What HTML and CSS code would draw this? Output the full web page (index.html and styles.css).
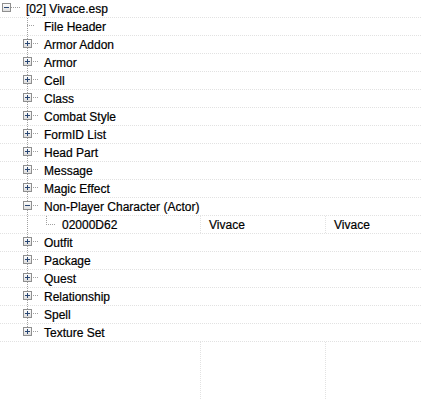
FILE: index.html
```html
<!DOCTYPE html>
<html>
<head>
<meta charset="utf-8">
<link rel="stylesheet" href="styles.css">
</head>
<body>
<svg class="defs" width="0" height="0" aria-hidden="true">
  <defs>
    <linearGradient id="boxfill" x1="0" y1="0" x2="0" y2="1">
      <stop offset="0" stop-color="#ffffff"/>
      <stop offset="1" stop-color="#dcdcdc"/>
    </linearGradient>
  </defs>
</svg>
<div class="tree">
  <div class="row">
    <span class="ind root"><svg class="box" width="9" height="9"><rect x="0.5" y="0.5" width="8" height="8" fill="url(#boxfill)" stroke="#8f8f8f"/><path d="M2 4.5h5" stroke="#2a4773"/></svg></span>
    <span class="label">[02] Vivace.esp</span>
  </div>
  <div class="row">
    <span class="ind l1 leaf"></span>
    <span class="label">File Header</span>
  </div>
  <div class="row">
    <span class="ind l1"><svg class="box" width="9" height="9"><rect x="0.5" y="0.5" width="8" height="8" fill="url(#boxfill)" stroke="#8f8f8f"/><path d="M2 4.5h5M4.5 2v5" stroke="#2a4773"/></svg></span>
    <span class="label">Armor Addon</span>
  </div>
  <div class="row">
    <span class="ind l1"><svg class="box" width="9" height="9"><rect x="0.5" y="0.5" width="8" height="8" fill="url(#boxfill)" stroke="#8f8f8f"/><path d="M2 4.5h5M4.5 2v5" stroke="#2a4773"/></svg></span>
    <span class="label">Armor</span>
  </div>
  <div class="row">
    <span class="ind l1"><svg class="box" width="9" height="9"><rect x="0.5" y="0.5" width="8" height="8" fill="url(#boxfill)" stroke="#8f8f8f"/><path d="M2 4.5h5M4.5 2v5" stroke="#2a4773"/></svg></span>
    <span class="label">Cell</span>
  </div>
  <div class="row">
    <span class="ind l1"><svg class="box" width="9" height="9"><rect x="0.5" y="0.5" width="8" height="8" fill="url(#boxfill)" stroke="#8f8f8f"/><path d="M2 4.5h5M4.5 2v5" stroke="#2a4773"/></svg></span>
    <span class="label">Class</span>
  </div>
  <div class="row">
    <span class="ind l1"><svg class="box" width="9" height="9"><rect x="0.5" y="0.5" width="8" height="8" fill="url(#boxfill)" stroke="#8f8f8f"/><path d="M2 4.5h5M4.5 2v5" stroke="#2a4773"/></svg></span>
    <span class="label">Combat Style</span>
  </div>
  <div class="row">
    <span class="ind l1"><svg class="box" width="9" height="9"><rect x="0.5" y="0.5" width="8" height="8" fill="url(#boxfill)" stroke="#8f8f8f"/><path d="M2 4.5h5M4.5 2v5" stroke="#2a4773"/></svg></span>
    <span class="label">FormID List</span>
  </div>
  <div class="row">
    <span class="ind l1"><svg class="box" width="9" height="9"><rect x="0.5" y="0.5" width="8" height="8" fill="url(#boxfill)" stroke="#8f8f8f"/><path d="M2 4.5h5M4.5 2v5" stroke="#2a4773"/></svg></span>
    <span class="label">Head Part</span>
  </div>
  <div class="row">
    <span class="ind l1"><svg class="box" width="9" height="9"><rect x="0.5" y="0.5" width="8" height="8" fill="url(#boxfill)" stroke="#8f8f8f"/><path d="M2 4.5h5M4.5 2v5" stroke="#2a4773"/></svg></span>
    <span class="label">Message</span>
  </div>
  <div class="row">
    <span class="ind l1"><svg class="box" width="9" height="9"><rect x="0.5" y="0.5" width="8" height="8" fill="url(#boxfill)" stroke="#8f8f8f"/><path d="M2 4.5h5M4.5 2v5" stroke="#2a4773"/></svg></span>
    <span class="label">Magic Effect</span>
  </div>
  <div class="row">
    <span class="ind l1"><svg class="box" width="9" height="9"><rect x="0.5" y="0.5" width="8" height="8" fill="url(#boxfill)" stroke="#8f8f8f"/><path d="M2 4.5h5" stroke="#2a4773"/></svg></span>
    <span class="label">Non-Player Character (Actor)</span>
  </div>
  <div class="row cols">
    <span class="cell c1"><span class="ind l2"></span><span class="label">02000D62</span></span>
    <span class="cell c2"><span class="label">Vivace</span></span>
    <span class="cell c3"><span class="label">Vivace</span></span>
  </div>
  <div class="row">
    <span class="ind l1"><svg class="box" width="9" height="9"><rect x="0.5" y="0.5" width="8" height="8" fill="url(#boxfill)" stroke="#8f8f8f"/><path d="M2 4.5h5M4.5 2v5" stroke="#2a4773"/></svg></span>
    <span class="label">Outfit</span>
  </div>
  <div class="row">
    <span class="ind l1"><svg class="box" width="9" height="9"><rect x="0.5" y="0.5" width="8" height="8" fill="url(#boxfill)" stroke="#8f8f8f"/><path d="M2 4.5h5M4.5 2v5" stroke="#2a4773"/></svg></span>
    <span class="label">Package</span>
  </div>
  <div class="row">
    <span class="ind l1"><svg class="box" width="9" height="9"><rect x="0.5" y="0.5" width="8" height="8" fill="url(#boxfill)" stroke="#8f8f8f"/><path d="M2 4.5h5M4.5 2v5" stroke="#2a4773"/></svg></span>
    <span class="label">Quest</span>
  </div>
  <div class="row">
    <span class="ind l1"><svg class="box" width="9" height="9"><rect x="0.5" y="0.5" width="8" height="8" fill="url(#boxfill)" stroke="#8f8f8f"/><path d="M2 4.5h5M4.5 2v5" stroke="#2a4773"/></svg></span>
    <span class="label">Relationship</span>
  </div>
  <div class="row">
    <span class="ind l1"><svg class="box" width="9" height="9"><rect x="0.5" y="0.5" width="8" height="8" fill="url(#boxfill)" stroke="#8f8f8f"/><path d="M2 4.5h5M4.5 2v5" stroke="#2a4773"/></svg></span>
    <span class="label">Spell</span>
  </div>
  <div class="row">
    <span class="ind l1 last"><svg class="box" width="9" height="9"><rect x="0.5" y="0.5" width="8" height="8" fill="url(#boxfill)" stroke="#8f8f8f"/><path d="M2 4.5h5M4.5 2v5" stroke="#2a4773"/></svg></span>
    <span class="label">Texture Set</span>
  </div>
  <div class="filler">
    <span class="cell c1"></span>
    <span class="cell c2"></span>
    <span class="cell c3"></span>
  </div>
</div>
</body>
</html>
```
FILE: styles.css
```css
html, body {
  margin: 0;
  padding: 0;
  background: #ffffff;
}

body {
  font-family: "Segoe UI", "Liberation Sans", "Noto Sans", sans-serif;
  font-size: 12px;
  color: #000000;
}

.defs {
  display: block;
  width: 0;
  height: 0;
  overflow: hidden;
}

.tree {
  width: 421px;
  height: 400px;
  overflow: hidden;
  display: flex;
  flex-direction: column;
}

.row {
  display: flex;
  flex: none;
  height: 18px;
  box-sizing: border-box;
  white-space: nowrap;
  background: repeating-linear-gradient(to right, #e2e2e2 0 1px, transparent 1px 2px) left bottom / 100% 1px no-repeat;
}

.label {
  display: block;
  line-height: 17px;
  height: 17px;
  padding-top: 1px;
  -webkit-text-stroke: 0.2px #000000;
}

.ind {
  flex: none;
  height: 18px;
  display: block;
}

.box {
  display: block;
}

.ind.root {
  width: 26px;
  background: repeating-linear-gradient(to right, #a0a0a0 0 1px, transparent 1px 2px) 11px 7px / 9px 1px no-repeat;
}

.ind.root .box {
  margin: 3px 0 0 2px;
}

.ind.l1 {
  width: 44px;
  background:
    repeating-linear-gradient(to bottom, #a0a0a0 0 1px, transparent 1px 2px) 27px 0 / 1px 100% no-repeat,
    repeating-linear-gradient(to right, #a0a0a0 0 1px, transparent 1px 2px) 27px 7px / 11px 1px no-repeat;
}

.ind.l1.leaf {
  background:
    repeating-linear-gradient(to bottom, #a0a0a0 0 1px, transparent 1px 2px) 27px 0 / 1px 100% no-repeat,
    repeating-linear-gradient(to right, #a0a0a0 0 1px, transparent 1px 2px) 27px 7px / 8px 1px no-repeat;
}

.ind.l1.last {
  background:
    repeating-linear-gradient(to bottom, #a0a0a0 0 1px, transparent 1px 2px) 27px 0 / 1px 8px no-repeat,
    repeating-linear-gradient(to right, #a0a0a0 0 1px, transparent 1px 2px) 27px 7px / 11px 1px no-repeat;
}

.ind.l1 .box {
  margin: 3px 0 0 23px;
}

.ind.l2 {
  width: 62px;
  background:
    repeating-linear-gradient(to bottom, #a0a0a0 0 1px, transparent 1px 2px) 27px 0 / 1px 100% no-repeat,
    repeating-linear-gradient(to bottom, #a0a0a0 0 1px, transparent 1px 2px) 46px 0 / 1px 9px no-repeat,
    repeating-linear-gradient(to right, #a0a0a0 0 1px, transparent 1px 2px) 46px 8px / 10px 1px no-repeat;
}

.cell {
  display: flex;
  box-sizing: border-box;
  background: repeating-linear-gradient(to bottom, #e2e2e2 0 1px, transparent 1px 2px) right top / 1px 100% no-repeat;
}

.row.cols .cell {
  height: 18px;
}

.cell.c1 {
  width: 201px;
}

.cell.c2 {
  width: 125px;
  padding-left: 8px;
}

.cell.c3 {
  flex: 1;
  padding-left: 8px;
  background: none;
}

.filler {
  flex: 1;
  display: flex;
}

.filler .cell {
  height: 100%;
}
```
